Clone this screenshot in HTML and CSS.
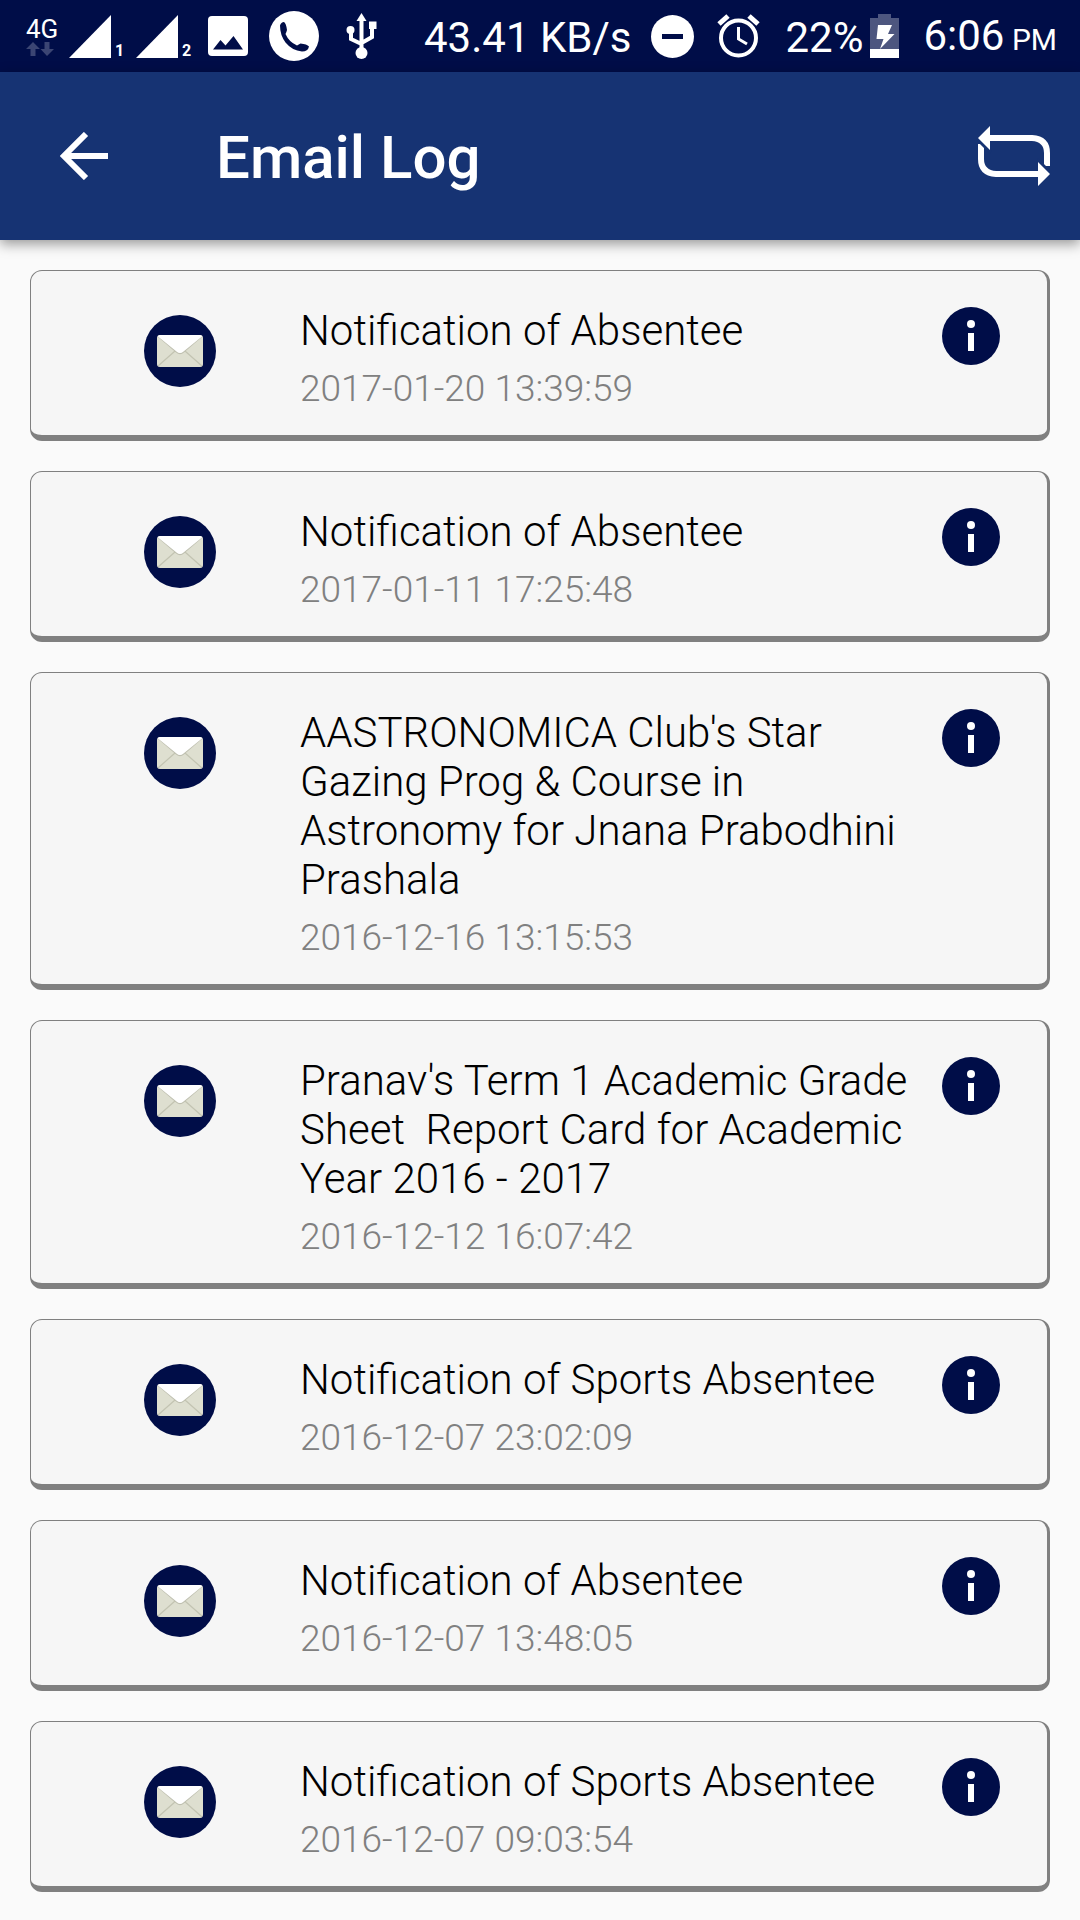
FILE: index.html
```html
<!DOCTYPE html>
<html lang="en">
<head>
    <meta charset="UTF-8">
    <meta name="viewport" content="width=device-width, initial-scale=1.0">
    <title>Email Log</title>
    <link rel="stylesheet" href="styles.css">
</head>
<body>

    <!-- shared icons -->
    <svg class="sprite" aria-hidden="true">
        <symbol id="icon-mail" viewBox="0 0 72 72">
            <circle cx="36" cy="36" r="36" fill="#000d48"/>
            <rect x="13" y="20" width="46" height="32" rx="3" fill="#dedfd0"/>
            <path d="M14 51L31 36M58 51L41 36" stroke="#c3c4b2" stroke-width="1.2" fill="none"/>
            <path d="M14 22L32 37.500Q36 41 40 37.500L58 22" fill="#bfc0b0"/>
            <path d="M14 21.500Q14 20 16 20H56Q58 20 58 21.500L39.500 36.500Q36 39.500 32.500 36.500Z" fill="#fff"/>
        </symbol>
        <symbol id="icon-info" viewBox="0 0 58 58">
            <circle cx="29" cy="29" r="29" fill="#000d48"/>
            <circle cx="29" cy="17" r="4" fill="#fff"/>
            <rect x="26" y="26" width="6" height="18" fill="#fff"/>
        </symbol>
    </svg>

    <div class="status-bar">
        <div class="status-left">
            <div class="network">
                <span>4G</span>
                <svg width="28" height="14" viewBox="0 0 28 14" fill="#3b4573"><path d="M7 0L14 7H9.500V14H4.500V7H0ZM21 14L14.500 7H18.500V0H23.500V7H28Z"/></svg>
            </div>
            <div class="signal">
                <svg width="42" height="43" viewBox="0 0 42 43"><path d="M42 0V43H0Z" fill="#fff"/></svg>
                <span>1</span>
            </div>
            <div class="signal">
                <svg width="42" height="43" viewBox="0 0 42 43"><path d="M42 0V43H0Z" fill="#fff"/></svg>
                <span>2</span>
            </div>
            <svg class="picture" width="40" height="40" viewBox="0 0 40 40"><rect width="40" height="40" rx="4" fill="#fff"/><path d="M5 33.500L12.500 24L17.500 29.500L25.500 20L35 33.500Z" fill="#000d48"/></svg>
            <svg class="phone" width="50" height="50" viewBox="0 0 50 50"><circle cx="25" cy="25" r="25" fill="#fff"/><path d="M11 14.500Q12 11 15 11Q17 12 18 19Q17.500 21 16.500 23Q20 31 28 34.500L31.500 32.500Q38 33 40 35.500Q39 40.500 33 40.500Q23 39.500 16.500 31.500Q11 24 11 14.500Z" fill="#000d48"/></svg>
            <svg class="usb" width="32" height="46" viewBox="0 0 32 46" fill="none" stroke="#fff" stroke-width="4"><path d="M15.500 40V5M15.500 31L5 26V17M15.500 30L26 24V15"/><path d="M15.500 0L20.500 8H10.500ZM23 8.500H30.500V16H23Z" fill="#fff" stroke="none"/><circle cx="4.500" cy="17" r="4" fill="#fff" stroke="none"/><circle cx="15.500" cy="40" r="6" fill="#fff" stroke="none"/></svg>
        </div>
        <div class="status-right">
            <span>43.41 KB/s</span>
            <svg class="dnd" width="43" height="43" viewBox="0 0 43 43"><circle cx="21.500" cy="21.500" r="21.500" fill="#fff"/><rect x="11" y="19" width="21" height="5" fill="#000d48"/></svg>
            <svg class="alarm" width="43" height="44" viewBox="0 0 43 44" fill="none" stroke="#fff"><circle cx="21.500" cy="24" r="17.500" stroke-width="4"/><path d="M21.500 13V25L30 30" stroke-width="3"/><path d="M2 10L11 2M32 2L41 10" stroke-width="5"/></svg>
            <span>22%</span>
            <svg class="battery" width="29" height="44" viewBox="0 0 29 44"><path d="M8 0H21V4H29V44H0V4H8Z" fill="#4d567f"/><path d="M0 35H29V44H0Z" fill="#fff"/><path d="M8 11H22L18 20H24.500L10 35L13.500 25H6.500Z" fill="#fff"/></svg>
            <span>6:06<small> PM</small></span>
        </div>
    </div>

    <header>
        <button class="back" aria-label="Back">
            <svg width="48" height="48" viewBox="0 0 48 48" fill="none" stroke="#fff" stroke-width="6"><path d="M48 24H5M26 2L4 24L26 46"/></svg>
        </button>
        <h1>Email Log</h1>
        <button class="refresh" aria-label="Refresh">
            <svg width="72" height="60" viewBox="0 0 72 60"><path d="M10 12H54Q69 13 69 27V40M62 48H18Q3 47 3 33V18" fill="none" stroke="#fff" stroke-width="6"/><path d="M-1 9L14 24L12 28L-1 15ZM73 51L58 36L60 32L73 45Z" fill="#163373"/><path d="M0 12L12 0V24ZM72 48L60 36V60Z" fill="#fff"/></svg>
        </button>
    </header>

    <main class="email-list">
        <div class="email">
            <svg class="mail-icon"><use href="#icon-mail"/></svg>
            <div class="details">
                <h2>Notification of Absentee</h2>
                <p>2017-01-20 13:39:59</p>
            </div>
            <button class="info" aria-label="Details"><svg><use href="#icon-info"/></svg></button>
        </div>
        <div class="email">
            <svg class="mail-icon"><use href="#icon-mail"/></svg>
            <div class="details">
                <h2>Notification of Absentee</h2>
                <p>2017-01-11 17:25:48</p>
            </div>
            <button class="info" aria-label="Details"><svg><use href="#icon-info"/></svg></button>
        </div>
        <div class="email">
            <svg class="mail-icon"><use href="#icon-mail"/></svg>
            <div class="details">
                <h2>AASTRONOMICA Club's Star Gazing Prog &amp; Course in Astronomy for Jnana Prabodhini Prashala</h2>
                <p>2016-12-16 13:15:53</p>
            </div>
            <button class="info" aria-label="Details"><svg><use href="#icon-info"/></svg></button>
        </div>
        <div class="email">
            <svg class="mail-icon"><use href="#icon-mail"/></svg>
            <div class="details">
                <h2>Pranav's Term 1 Academic Grade Sheet  Report Card for Academic Year 2016 - 2017</h2>
                <p>2016-12-12 16:07:42</p>
            </div>
            <button class="info" aria-label="Details"><svg><use href="#icon-info"/></svg></button>
        </div>
        <div class="email">
            <svg class="mail-icon"><use href="#icon-mail"/></svg>
            <div class="details">
                <h2>Notification of Sports Absentee</h2>
                <p>2016-12-07 23:02:09</p>
            </div>
            <button class="info" aria-label="Details"><svg><use href="#icon-info"/></svg></button>
        </div>
        <div class="email">
            <svg class="mail-icon"><use href="#icon-mail"/></svg>
            <div class="details">
                <h2>Notification of Absentee</h2>
                <p>2016-12-07 13:48:05</p>
            </div>
            <button class="info" aria-label="Details"><svg><use href="#icon-info"/></svg></button>
        </div>
        <div class="email">
            <svg class="mail-icon"><use href="#icon-mail"/></svg>
            <div class="details">
                <h2>Notification of Sports Absentee</h2>
                <p>2016-12-07 09:03:54</p>
            </div>
            <button class="info" aria-label="Details"><svg><use href="#icon-info"/></svg></button>
        </div>
    </main>

</body>
</html>
```
FILE: styles.css
```css
body {
    font-family: Roboto, sans-serif;
    margin: 0;
    padding: 0;
    background-color: #fafafa;
}

svg {
    display: block;
    flex-shrink: 0;
}

button {
    background: none;
    border: none;
    padding: 0;
    cursor: pointer;
}

.sprite {
    display: none;
}

.status-bar {
    display: flex;
    justify-content: space-between;
    height: 72px;
    padding: 0 23px 0 26px;
    background-color: #000d48;
    color: white;
}

.status-left,
.status-right {
    display: flex;
    align-items: center;
}

.status-right {
    font-size: 42px;
    line-height: 48px;
    white-space: nowrap;
}

.status-right span {
    padding-top: 4px;
}

.status-right small {
    font-size: 30px;
}

.network {
    width: 32px;
    margin-right: 11px;
    font-size: 26px;
    line-height: 26px;
}

.signal {
    display: flex;
    align-items: flex-end;
    gap: 4px;
    width: 67px;
    font-size: 16px;
    line-height: 14px;
    font-weight: bold;
}

.picture {
    margin-left: 5px;
}

.phone {
    margin-left: 21px;
}

.usb {
    margin-left: 27px;
}

.dnd {
    margin: 0 23px 0 20px;
}

.alarm {
    margin-right: 25px;
}

.battery {
    margin: 0 24px 0 7px;
}

header {
    display: flex;
    align-items: center;
    height: 168px;
    padding: 0 30px 0 60px;
    background-color: #163373;
    color: white;
    box-shadow: 0 4px 12px rgba(0, 0, 0, 0.4);
}

header h1 {
    flex: 1;
    margin: 0 0 0 108px;
    padding-top: 4px;
    font-size: 60px;
    line-height: 70px;
    font-weight: 500;
}

.email-list {
    display: flex;
    flex-direction: column;
    gap: 30px;
    padding: 30px 30px 0;
}

.email {
    display: flex;
    align-items: flex-start;
    padding: 35px 47px 25px 113px;
    background-color: #f6f6f6;
    border: 1px solid #808080;
    border-right-width: 3px;
    border-bottom-width: 6px;
    border-radius: 12px;
}

.mail-icon {
    width: 72px;
    height: 72px;
    margin-top: 9px;
}

.details {
    flex: 1;
    margin: 0 10px 0 84px;
    font-weight: 300;
}

.details h2 {
    margin: 0 0 13px;
    font-size: 42px;
    line-height: 49px;
    font-weight: 300;
    color: black;
    white-space: pre-wrap;
}

.details p {
    margin: 0;
    font-size: 37px;
    line-height: 42px;
    color: #808080;
}

.info {
    margin-top: 1px;
}

.info svg {
    width: 58px;
    height: 58px;
}
```
